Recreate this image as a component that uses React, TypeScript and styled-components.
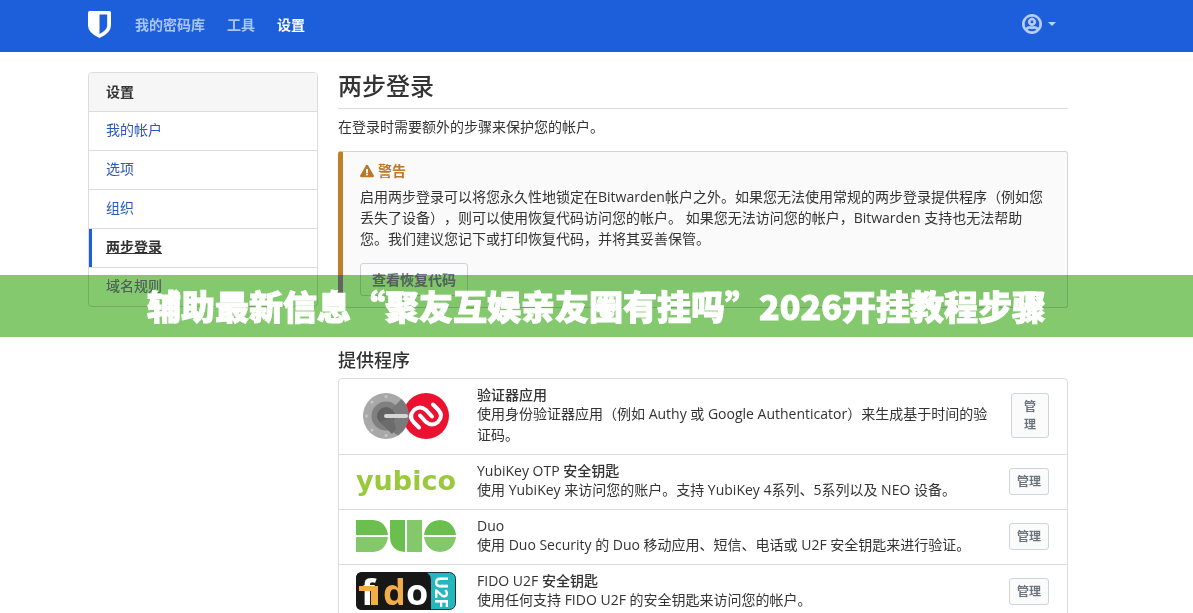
import React from "react";
import styled, { createGlobalStyle } from "styled-components";

const GlobalStyle = createGlobalStyle`
  *, *::before, *::after { box-sizing: border-box; }
  body {
    margin: 0;
    background: #fff;
    color: #333;
    font-family: "Open Sans", "Noto Sans CJK SC", sans-serif;
    font-size: 14px;
    line-height: 21px;
    text-spacing-trim: space-all;
  }
  h1, h2, h3, p, ul { margin: 0; padding: 0; }
  button { font-family: inherit; cursor: pointer; }
`;

const Page = styled.div`
  position: relative;
  min-height: 100vh;
  background: #fff;
`;

const Shell = styled.div`
  width: 100%;
  max-width: 1017px;
  margin: 0 auto;
  padding: 0 37px 0 0;
`;

const TopBar = styled.header`
  background: #1d5fdb;
  height: 52px;
`;

const NavRow = styled(Shell)`
  display: flex;
  align-items: center;
  justify-content: space-between;
  height: 48px;
`;

const NavGroup = styled.nav`
  display: flex;
  align-items: center;
  gap: 22px;
`;

const Logo = styled.svg`
  display: block;
  width: 23px;
  height: 28px;
  margin-right: 2px;
`;

const NavLink = styled.a<{ $active?: boolean }>`
  color: ${(p) => (p.$active ? "#fff" : "#a9c5f5")};
  font-weight: 700;
  text-decoration: none;
`;

const AccountButton = styled.button`
  display: flex;
  align-items: center;
  gap: 6px;
  padding: 0;
  margin-right: 12px;
  border: 0;
  background: none;
  color: #bcd1f7;
`;

const Body = styled(Shell)`
  display: grid;
  grid-template-columns: 230px minmax(0, 1fr);
  gap: 20px;
  align-items: start;
  padding-top: 20px;
`;

const SideCard = styled.aside`
  border: 1px solid #dcdcdc;
  border-radius: 4px;
  overflow: hidden;
`;

const SideTitle = styled.h2`
  padding: 8px 17px 9px;
  background: #f6f6f6;
  font-size: 14px;
  line-height: 21px;
`;

const SideLink = styled.a<{ $active?: boolean }>`
  display: block;
  padding: 7px 17px 10px;
  border-top: 1px solid #dcdcdc;
  color: ${(p) => (p.$active ? "#333" : "#2c57bd")};
  font-weight: ${(p) => (p.$active ? 700 : 400)};
  text-decoration: ${(p) => (p.$active ? "underline" : "none")};
  box-shadow: ${(p) => (p.$active ? "inset 3px 0 0 #1d5fdb" : "none")};
`;

const Title = styled.h1`
  padding-bottom: 8px;
  border-bottom: 1px solid #dcdcdc;
  font-size: 24px;
  font-weight: 500;
  line-height: 28px;
`;

const Intro = styled.p`
  padding: 7px 0 14px;
`;

const Callout = styled.section`
  padding: 8px 20px 11px 17px;
  border: 1px solid #d4d4d4;
  border-left: 5px solid #bf7e28;
  border-radius: 3px;
  background: #fafafa;
`;

const CalloutTitle = styled.h3`
  display: flex;
  align-items: center;
  gap: 4px;
  margin-bottom: 5px;
  color: #b9772a;
  font-size: 14px;
  line-height: 21px;
`;

const Button = styled.button`
  border: 1px solid #ced4da;
  border-radius: 3px;
  background: #fbfbfb;
  color: #6c757d;
  font-weight: 700;
  font-size: 14px;
  line-height: 21px;
  padding: 5px 11px;
`;

const RecoveryButton = styled(Button)`
  margin-top: 14px;
`;

const ManageButton = styled(Button)`
  width: 100%;
  padding: 4px 7px 3px;
  font-size: 12px;
  line-height: 18px;
`;

const SectionTitle = styled.h2`
  margin: 40px 0 6px;
  font-size: 18px;
  font-weight: 500;
  line-height: 24px;
`;

const Providers = styled.ul`
  list-style: none;
  border: 1px solid #dcdcdc;
  border-radius: 4px;
`;

const Provider = styled.li`
  display: flex;
  align-items: center;
  padding: 7px 18px 9px 17px;
  & + & { border-top: 1px solid #dcdcdc; }
`;

const LogoCell = styled.div`
  flex: 0 0 100px;
  display: flex;
  justify-content: center;
  margin-right: 21px;
  svg { overflow: visible; }
`;

const ProviderText = styled.div`
  flex: 1;
  min-width: 0;
`;

const ProviderName = styled.h3`
  font-size: 14px;
  font-weight: 500;
  line-height: 17px;
`;

const Action = styled.div<{ $narrow?: boolean }>`
  flex: 0 0 ${(p) => (p.$narrow ? 38 : 40)}px;
  margin-left: 20px;
`;

const Banner = styled.div`
  position: absolute;
  top: 275px;
  left: 0;
  right: 0;
  height: 62px;
  color: #fff;
  font-family: "Noto Sans CJK SC", sans-serif;
  font-size: 34px;
  font-weight: 900;
  line-height: 62px;
  text-align: center;
  white-space: nowrap;
  -webkit-text-stroke: 1px #fff;

  &::before,
  &::after {
    content: "";
    position: absolute;
    inset: 0;
    background: #84c96e;
    mix-blend-mode: multiply;
  }

  &::after {
    background: #5a5a5f;
    mix-blend-mode: lighten;
  }
`;

const BannerText = styled.span`
  position: relative;
  z-index: 1;
`;

const ShieldLogo = () => (
  <Logo viewBox="0 0 24 28" preserveAspectRatio="none" aria-label="Bitwarden">
    <path fill="#fff" d="M1.500 1h21q1.500 0 1.500 1.500v13q0 7.500-12 12.500Q0 23 0 15.500v-13Q0 1 1.500 1Z" />
    <path fill="#1d5fdb" d="M12 4.500h8v11q0 4.500-8 8.500Z" />
  </Logo>
);

const UserIcon = () => (
  <svg width="20" height="20" viewBox="-8 -4 512 520" aria-hidden="true">
    <path
      fill="currentColor"
      stroke="currentColor"
      strokeWidth="22"
      d="M248 104c-53 0-96 43-96 96s43 96 96 96 96-43 96-96-43-96-96-96zm0 144c-26.500 0-48-21.500-48-48s21.500-48 48-48 48 21.500 48 48-21.500 48-48 48zm0-240C111 8 0 119 0 256s111 248 248 248 248-111 248-248S385 8 248 8zm0 448c-49.700 0-95.100-18.300-130.100-48.400 14.900-23 40.400-38.600 69.600-39.500 20.800 6.400 40.600 9.600 60.500 9.600s39.700-3.100 60.500-9.600c29.200 1 54.700 16.500 69.600 39.500-35 30.100-80.400 48.400-130.100 48.400zm162.700-84.100c-24.400-31.400-62.100-51.900-105.100-51.900-10.200 0-26 9.600-57.600 9.600-31.500 0-47.400-9.600-57.600-9.600-42.900 0-80.600 20.500-105.100 51.900C61.900 339.200 48 299.200 48 256c0-110.300 89.700-200 200-200s200 89.700 200 200c0 43.200-13.900 83.200-37.300 115.900z"
    />
  </svg>
);

const AuthenticatorLogo = () => (
  <svg width="88" height="48" viewBox="0 0 88 48" aria-hidden="true">
    <circle cx="24" cy="24" r="23" fill="#a8a8a8" />
    <circle cx="64" cy="24" r="23" fill="#ea1230" />
    <circle cx="24" cy="24" r="14.500" fill="#808080" />
    <path fill="#7a7a7a" d="M31 15.500 39.500 7q7.500 7 7.500 17 0 11-11 19.500L17 30l7-6Z" />
    <circle cx="24" cy="24" r="9" fill="#626262" />
    <path fill="#6c6c6c" d="M17.500 30 30 42l4-5-3-12Z" />
    <g fill="#c6c6c6">
      <circle cx="24" cy="4.500" r="1.500" /><circle cx="10" cy="10" r="1.500" />
      <circle cx="4.500" cy="24" r="1.500" /><circle cx="10" cy="38" r="1.500" /><circle cx="24" cy="43.500" r="1.500" />
    </g>
    <path d="M24 24h20" stroke="#d6d6d6" strokeWidth="4" strokeLinecap="round" />
    <g fill="none" stroke="#fff" strokeWidth="4" strokeLinecap="round">
      <path d="M57 35.500l-5-5q-6-6 0-12.500 6-5 12 0l6 6.500" />
      <path d="M71 12.500l5 5q6 6 0 12.500-6 5-12 0l-6-6.500" />
    </g>
  </svg>
);

const YubicoLogo = () => (
  <svg width="100" height="32" viewBox="0 0 100 32" role="img" aria-label="yubico">
    <text x="0" y="25" fill="#9aca3c" fontFamily="DejaVu Sans, sans-serif" fontWeight="700" fontSize="27">
      yubico
    </text>
  </svg>
);

const DuoLogo = () => (
  <svg width="100" height="32" viewBox="0 0 100 32" aria-hidden="true">
    <g fill="#6bbf4f">
      <path d="M0 0h17q13 1 15 15H0Z" />
      <path d="M34 0h15v32q-15-1-15-16Z" />
      <path d="M68 15q2-14 16-15 14 1 16 15Z" />
    </g>
    <g fill="#83c96c">
      <path d="M0 17h32q-2 14-15 15H0Z" />
      <path d="M51 0h15v32H51Z" />
      <path d="M68 17h32q-2 14-16 15-14-1-16-15Z" />
    </g>
  </svg>
);

const FidoLogo = () => (
  <svg width="100" height="38" viewBox="0 0 100 38" role="img" aria-label="fido U2F">
    <rect x="0.500" y="0.500" width="99" height="37" rx="6" fill="#25b7be" stroke="#183238" />
    <path fill="#171717" d="M6 0h63q6 2 6 8v30H6q-6 0-6-6V6q0-6 6-6Z" />
    <g fontFamily="Open Sans, sans-serif" fontWeight="700" fontSize="36">
      <text x="5" y="33" fill="#fff">f</text>
      <text x="27" y="33" fill="#f2ad4b">d</text>
      <text x="50" y="33" fill="#fff">o</text>
    </g>
    <path fill="#f2ad4b" d="M3 14h19v19h-7V19H3Z" />
    <text transform="translate(79 4) rotate(90)" fill="#fff" fontFamily="Open Sans, sans-serif" fontWeight="700" fontSize="17">
      U2F
    </text>
  </svg>
);

const sideLinks = ["我的帐户", "选项", "组织", "两步登录", "域名规则"];

const providers = [
  { name: "验证器应用", text: "使用身份验证器应用（例如 Authy 或 Google Authenticator）来生成基于时间的验证码。", logo: <AuthenticatorLogo />, narrow: true },
  { name: "YubiKey OTP 安全钥匙", text: "使用 YubiKey 来访问您的账户。支持 YubiKey 4系列、5系列以及 NEO 设备。", logo: <YubicoLogo /> },
  { name: "Duo", text: "使用 Duo Security 的 Duo 移动应用、短信、电话或 U2F 安全钥匙来进行验证。", logo: <DuoLogo /> },
  { name: "FIDO U2F 安全钥匙", text: "使用任何支持 FIDO U2F 的安全钥匙来访问您的帐户。", logo: <FidoLogo /> },
];

export default function App() {
  return (
    <Page lang="zh-CN">
      <GlobalStyle />
      <TopBar>
        <NavRow>
          <NavGroup>
            <ShieldLogo />
            <NavLink href="#vault">我的密码库</NavLink>
            <NavLink href="#tools">工具</NavLink>
            <NavLink href="#settings" $active>设置</NavLink>
          </NavGroup>
          <AccountButton type="button" aria-label="帐户">
            <UserIcon />
            <svg width="8" height="4" viewBox="0 0 8 4" aria-hidden="true"><path d="M0 0h8L4 4Z" fill="currentColor" /></svg>
          </AccountButton>
        </NavRow>
      </TopBar>
      <Body>
        <SideCard>
          <SideTitle>设置</SideTitle>
          {sideLinks.map((label) => (
            <SideLink key={label} href="#" $active={label === "两步登录"}>{label}</SideLink>
          ))}
        </SideCard>
        <main>
          <Title>两步登录</Title>
          <Intro>在登录时需要额外的步骤来保护您的帐户。</Intro>
          <Callout>
            <CalloutTitle>
              <svg width="14" height="14" viewBox="0 0 576 512" aria-hidden="true">
                <path fill="currentColor" d="M569.500 440c18.500 32-4.700 72-41.600 72H48c-36.900 0-60-40-41.600-72L246.400 24c18.500-32 64.700-32 83.200 0l239.900 416zM288 354c-25.400 0-46 20.600-46 46s20.600 46 46 46 46-20.600 46-46-20.600-46-46-46zm-43.700-165.300l7.400 136c.3 6.400 5.600 11.300 12 11.300h48.500c6.400 0 11.600-5 12-11.300l7.400-136c.4-6.900-5.100-12.700-12-12.700h-63.400c-6.900 0-12.300 5.800-11.900 12.700z" />
              </svg>
              警告
            </CalloutTitle>
            <p>启用两步登录可以将您永久性地锁定在Bitwarden帐户之外。如果您无法使用常规的两步登录提供程序（例如您丢失了设备），则可以使用恢复代码访问您的帐户。 如果您无法访问您的帐户，Bitwarden 支持也无法帮助您。我们建议您记下或打印恢复代码，并将其妥善保管。</p>
            <RecoveryButton type="button">查看恢复代码</RecoveryButton>
          </Callout>
          <SectionTitle>提供程序</SectionTitle>
          <Providers>
            {providers.map((p) => (
              <Provider key={p.name}>
                <LogoCell>{p.logo}</LogoCell>
                <ProviderText>
                  <ProviderName>{p.name}</ProviderName>
                  <p>{p.text}</p>
                </ProviderText>
                <Action $narrow={p.narrow}><ManageButton type="button">{p.narrow ? <>管<br />理</> : "管理"}</ManageButton></Action>
              </Provider>
            ))}
          </Providers>
        </main>
      </Body>
      <Banner>
        <BannerText>辅助最新信息“聚友互娱亲友圈有挂吗”2026开挂教程步骤</BannerText>
      </Banner>
    </Page>
  );
}
